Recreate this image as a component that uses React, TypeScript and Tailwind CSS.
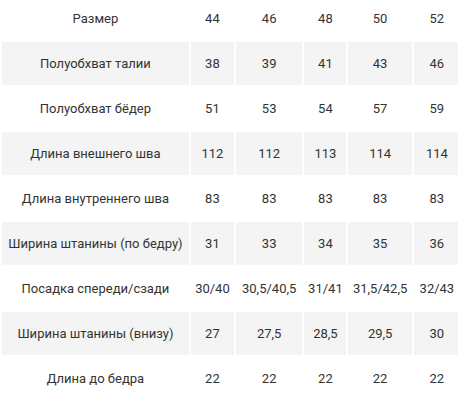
const sizes = ["44", "46", "48", "50", "52"];

const rows: { label: string; values: string[] }[] = [
  { label: "Размер", values: sizes },
  { label: "Полуобхват талии", values: ["38", "39", "41", "43", "46"] },
  { label: "Полуобхват бёдер", values: ["51", "53", "54", "57", "59"] },
  { label: "Длина внешнего шва", values: ["112", "112", "113", "114", "114"] },
  { label: "Длина внутреннего шва", values: ["83", "83", "83", "83", "83"] },
  { label: "Ширина штанины (по бедру)", values: ["31", "33", "34", "35", "36"] },
  { label: "Посадка спереди/сзади", values: ["30/40", "30,5/40,5", "31/41", "31,5/42,5", "32/43"] },
  { label: "Ширина штанины (внизу)", values: ["27", "27,5", "28,5", "29,5", "30"] },
  { label: "Длина до бедра", values: ["22", "22", "22", "22", "22"] },
];

const colWidths = ["w-[43px]", "w-[66px]", "w-[42px]", "w-[63px]", "w-[46px]"];

export default function App() {
  return (
    <div className="w-[458px] h-[400px] overflow-hidden bg-white">
      <table
        className="-mt-[5px] border-separate border-spacing-[2px] table-fixed w-[462px] text-[13px] text-[#333] text-center"
        style={{ fontFamily: "Roboto, 'Liberation Sans', sans-serif" }}
      >
        <colgroup>
          <col className="w-[186px]" />
          {colWidths.map((w, i) => (
            <col key={i} className={w} />
          ))}
        </colgroup>
        <tbody>
          {rows.map((row, i) => (
            <tr key={row.label} className={i % 2 === 1 ? "bg-transparent" : ""}>
              <td className={`h-[43px] p-0 ${i % 2 === 1 ? "bg-[#f4f4f4]" : "bg-white"}`}>{row.label}</td>
              {row.values.map((v, j) => (
                <td key={j} className={`h-[43px] p-0 whitespace-nowrap ${i % 2 === 1 ? "bg-[#f4f4f4]" : "bg-white"}`}>
                  {v}
                </td>
              ))}
            </tr>
          ))}
        </tbody>
      </table>
    </div>
  );
}
